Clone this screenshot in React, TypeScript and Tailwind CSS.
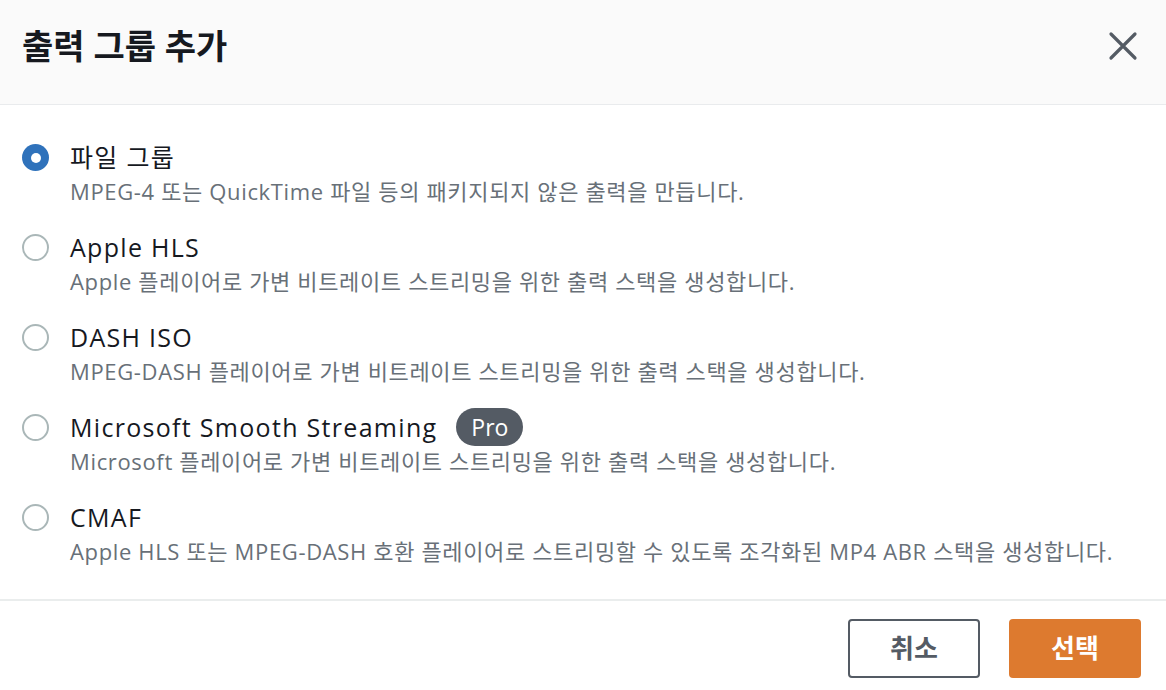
import React, { useState } from "react";

const options = [
  { label: "파일 그룹", desc: "MPEG-4 또는 QuickTime 파일 등의 패키지되지 않은 출력을 만듭니다." },
  { label: "Apple HLS", desc: "Apple 플레이어로 가변 비트레이트 스트리밍을 위한 출력 스택을 생성합니다." },
  { label: "DASH ISO", desc: "MPEG-DASH 플레이어로 가변 비트레이트 스트리밍을 위한 출력 스택을 생성합니다." },
  { label: "Microsoft Smooth Streaming", desc: "Microsoft 플레이어로 가변 비트레이트 스트리밍을 위한 출력 스택을 생성합니다.", pro: true },
  { label: "CMAF", desc: "Apple HLS 또는 MPEG-DASH 호환 플레이어로 스트리밍할 수 있도록 조각화된 MP4 ABR 스택을 생성합니다." },
];

export default function App() {
  const [sel, setSel] = useState(0);
  return (
    <div
      className="w-[1166px] h-[690px] bg-white flex flex-col overflow-hidden text-[#16191f]"
      style={{ fontFamily: '"Open Sans", "Noto Sans CJK KR", sans-serif' }}
    >
      <div className="h-[105px] shrink-0 bg-[#fafafa] border-b border-[#e9ebed] flex items-center justify-between pl-[22px] pr-[28px]">
        <h1 className="text-[34px] font-bold leading-none tracking-[0px] text-[#16191f] -mt-[12px]">출력 그룹 추가</h1>
        <button className="w-[30px] h-[30px] flex items-center justify-center -mt-[12px]">
          <svg width="30" height="30" viewBox="0 0 30 30">
            <path d="M3 3 L27 27 M27 3 L3 27" stroke="#545b64" strokeWidth="3.2" strokeLinecap="round" />
          </svg>
        </button>
      </div>
      <div className="flex-1 flex flex-col pt-[34px] pl-[22px]">
        {options.map((o, i) => (
          <div key={i} className="flex h-[90px] cursor-pointer" onClick={() => setSel(i)}>
            <div className="w-[48px] shrink-0 pt-[5px]">
              {sel === i ? (
                <div className="w-[27px] h-[27px] rounded-full bg-[#2f72bb] flex items-center justify-center">
                  <div className="w-[10px] h-[10px] rounded-full bg-white" />
                </div>
              ) : (
                <div className="w-[27px] h-[27px] rounded-full border-2 border-[#aab7b8] bg-white" />
              )}
            </div>
            <div className="flex flex-col">
              <div className="flex items-center h-[36px]">
                <span className="text-[25px] leading-[36px] tracking-[1.3px] text-[#16191f]">{o.label}</span>
                {o.pro && (
                  <span className="ml-[19px] h-[38px] w-[67px] text-center rounded-full bg-[#545b64] text-white text-[23px] leading-[38px] font-medium">
                    Pro
                  </span>
                )}
              </div>
              <div className="text-[22px] leading-[30px] tracking-[0.65px] text-[#687078] mt-[1px]">{o.desc}</div>
            </div>
          </div>
        ))}
      </div>
      <div className="h-[91px] shrink-0 border-t-2 border-[#eaeded] flex justify-end items-start pt-[18px] pr-[25px] gap-[29px]">
        <button className="w-[132px] h-[59px] rounded-[4px] border-2 border-[#545b64] bg-white text-[#545b64] text-[26px] font-bold">
          취소
        </button>
        <button className="w-[132px] h-[59px] rounded-[4px] bg-[#dd7a2f] text-white text-[26px] font-bold">
          선택
        </button>
      </div>
    </div>
  );
}
